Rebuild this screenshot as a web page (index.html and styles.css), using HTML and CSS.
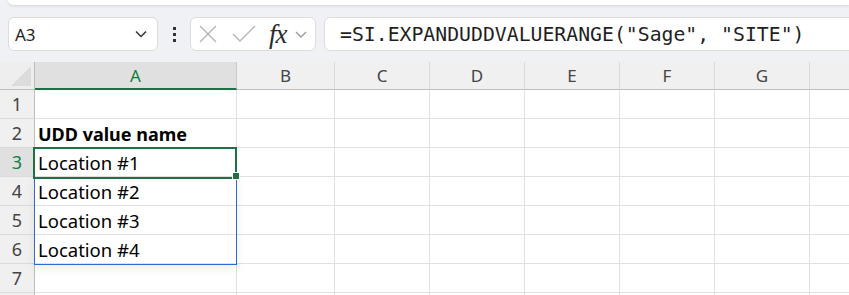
FILE: index.html
```html
<!DOCTYPE html>
<html>
<head>
    <title>Sheet</title>
    <meta charset="UTF-8">
    <link rel="stylesheet" href="styles.css">
</head>
<body>

<div class="ribbon-edge"></div>

<div class="toolbar">
    <div class="name-box">
        <span>A3</span>
        <svg class="chev" width="12" height="8" viewBox="0 0 12 8"><path d="M1 1.5 L6 6.5 L11 1.5" fill="none" stroke="#333" stroke-width="1.5"/></svg>
    </div>
    <div class="more">
        <span class="dot"></span><span class="dot"></span><span class="dot"></span>
    </div>
    <div class="fx-box">
        <svg class="icon-x" width="20" height="20" viewBox="0 0 20 20"><path d="M2 2 L18 18 M18 2 L2 18" stroke="#b5b5b5" stroke-width="1.4" fill="none"/></svg>
        <svg class="icon-ok" width="24" height="20" viewBox="0 0 24 20"><path d="M1 10 L8 17 L23 2" stroke="#b5b5b5" stroke-width="1.4" fill="none"/></svg>
        <span class="fx">fx</span>
        <svg class="icon-drop" width="12" height="7" viewBox="0 0 12 7"><path d="M1 1 L6 6 L11 1" fill="none" stroke="#999" stroke-width="1.3"/></svg>
    </div>
    <div class="formula">=SI.EXPANDUDDVALUERANGE("Sage", "SITE")</div>
</div>

<div class="sheet">
    <div class="grid">
        <div class="corner"><span class="tri"></span></div>
        <div class="colhead active">A</div>
        <div class="colhead">B</div>
        <div class="colhead">C</div>
        <div class="colhead">D</div>
        <div class="colhead">E</div>
        <div class="colhead">F</div>
        <div class="colhead">G</div>
        <div class="colhead"></div>

        <div class="rowhead">1</div>
        <div class="cell"></div><div class="cell"></div><div class="cell"></div><div class="cell"></div><div class="cell"></div><div class="cell"></div><div class="cell"></div><div class="cell"></div>

        <div class="rowhead">2</div>
        <div class="cell bold">UDD value name</div><div class="cell"></div><div class="cell"></div><div class="cell"></div><div class="cell"></div><div class="cell"></div><div class="cell"></div><div class="cell"></div>

        <div class="rowhead active">3</div>
        <div class="cell">Location #1</div><div class="cell"></div><div class="cell"></div><div class="cell"></div><div class="cell"></div><div class="cell"></div><div class="cell"></div><div class="cell"></div>

        <div class="rowhead">4</div>
        <div class="cell">Location #2</div><div class="cell"></div><div class="cell"></div><div class="cell"></div><div class="cell"></div><div class="cell"></div><div class="cell"></div><div class="cell"></div>

        <div class="rowhead">5</div>
        <div class="cell">Location #3</div><div class="cell"></div><div class="cell"></div><div class="cell"></div><div class="cell"></div><div class="cell"></div><div class="cell"></div><div class="cell"></div>

        <div class="rowhead">6</div>
        <div class="cell">Location #4</div><div class="cell"></div><div class="cell"></div><div class="cell"></div><div class="cell"></div><div class="cell"></div><div class="cell"></div><div class="cell"></div>

        <div class="rowhead">7</div>
        <div class="cell"></div><div class="cell"></div><div class="cell"></div><div class="cell"></div><div class="cell"></div><div class="cell"></div><div class="cell"></div><div class="cell"></div>

        <div class="rowhead"></div>
        <div class="cell"></div><div class="cell"></div><div class="cell"></div><div class="cell"></div><div class="cell"></div><div class="cell"></div><div class="cell"></div><div class="cell"></div>
    </div>

    <!-- selection overlays -->
    <div class="range"></div>
    <div class="active-cell"></div>
    <div class="handle"></div>
</div>

</body>
</html>
```

FILE: styles.css
```css
/* Global styles */
body {
    background-color: #eff1f4;
    margin: 0;
    padding: 0;
    font-family: "Noto Sans", "Open Sans", sans-serif;
    color: #000000;
    height: 295px;
    overflow: hidden;
}

.ribbon-edge {
    height: 5px;
    margin: 0 0 0 8px;
    background: #ffffff;
    border-radius: 0 0 0 8px;
    box-shadow: 0 1px 3px rgba(0, 0, 0, 0.12);
}

/* Formula toolbar */
.toolbar {
    display: flex;
    align-items: center;
    padding: 12px 0 11px 8px;
    margin-right: -12px;
}

.name-box {
    box-sizing: border-box;
    width: 150px;
    height: 34px;
    background: #ffffff;
    border: 1px solid #dcdcdc;
    border-radius: 6px;
    display: flex;
    align-items: center;
    justify-content: space-between;
    padding: 0 10px 0 6px;
    font-size: 17px;
    color: #1f1f1f;
}

.more {
    width: 32px;
    display: flex;
    flex-direction: column;
    align-items: center;
    gap: 3px;
}

.dot {
    width: 3px;
    height: 3px;
    background: #333333;
}

.fx-box {
    box-sizing: border-box;
    width: 126px;
    height: 34px;
    background: #ffffff;
    border: 1px solid #dcdcdc;
    border-radius: 6px;
    display: flex;
    align-items: center;
    padding: 0 0 0 7px;
}

.icon-ok {
    margin-left: 14px;
}

.fx {
    font-family: "Liberation Serif", serif;
    font-style: italic;
    font-size: 27px;
    color: #2b2b2b;
    margin-left: 13px;
    line-height: 1;
    letter-spacing: -1px;
}

.icon-drop {
    margin-left: 8px;
}

.formula {
    box-sizing: border-box;
    flex: 1;
    height: 34px;
    margin-left: 8px;
    background: #ffffff;
    border: 1px solid #dcdcdc;
    border-radius: 6px 0 0 6px;
    font-family: "DejaVu Sans Mono", "Liberation Mono", monospace;
    font-size: 19.8px;
    color: #1f1f1f;
    display: flex;
    align-items: center;
    padding-left: 15px;
    white-space: nowrap;
}

/* Sheet grid */
.sheet {
    position: relative;
    background: #ffffff;
    height: 233px;
    overflow: hidden;
}

.grid {
    display: grid;
    grid-template-columns: 35px 202px 98px 95px 95px 95px 95px 95px 60px;
    grid-template-rows: 28px repeat(8, 29px);
}

.grid > div {
    box-sizing: border-box;
}

.corner {
    background: #eeeeee;
    border-right: 1px solid #bdbdbd;
    border-bottom: 1px solid #bdbdbd;
    position: relative;
}

.tri {
    position: absolute;
    right: 3px;
    bottom: 3px;
    width: 0;
    height: 0;
    border-left: 20px solid transparent;
    border-bottom: 20px solid #dcdcdc;
}

.colhead {
    background: #f0f0f0;
    border-right: 1px solid #dadada;
    border-bottom: 1px solid #bdbdbd;
    display: flex;
    align-items: center;
    justify-content: center;
    font-size: 17px;
    color: #444444;
}

.colhead.active {
    background: #e0e0e0;
    color: #107c41;
    border-bottom: 2px solid #1e7145;
    border-right: 1px solid #c8c8c8;
}

.rowhead {
    background: #f0f0f0;
    border-right: 1px solid #bdbdbd;
    border-bottom: 1px solid #dadada;
    display: flex;
    align-items: center;
    justify-content: center;
    font-size: 18px;
    color: #444444;
}

.rowhead.active {
    background: #e0e0e0;
    color: #107c41;
}

.cell {
    border-right: 1px solid #e1e1e1;
    border-bottom: 1px solid #e1e1e1;
    font-size: 18.5px;
    padding: 1px 0 0 3px;
    display: flex;
    align-items: center;
    white-space: nowrap;
}

.cell.bold {
    font-weight: bold;
    font-size: 18px;
}

/* Selection */
.range {
    position: absolute;
    left: 34px;
    top: 115px;
    width: 203px;
    height: 88px;
    border: 1px solid #2c6bcf;
    border-top: none;
    box-sizing: border-box;
    box-shadow: 0 4px 10px rgba(0, 0, 0, 0.07);
}

.active-cell {
    position: absolute;
    left: 33px;
    top: 85px;
    width: 204px;
    height: 32px;
    border: 2px solid #1e7145;
    box-sizing: border-box;
}

.handle {
    position: absolute;
    left: 233px;
    top: 111px;
    width: 6px;
    height: 6px;
    background: #1e7145;
    border: 1px solid #ffffff;
    margin: -1px 0 0 -1px;
}
```
